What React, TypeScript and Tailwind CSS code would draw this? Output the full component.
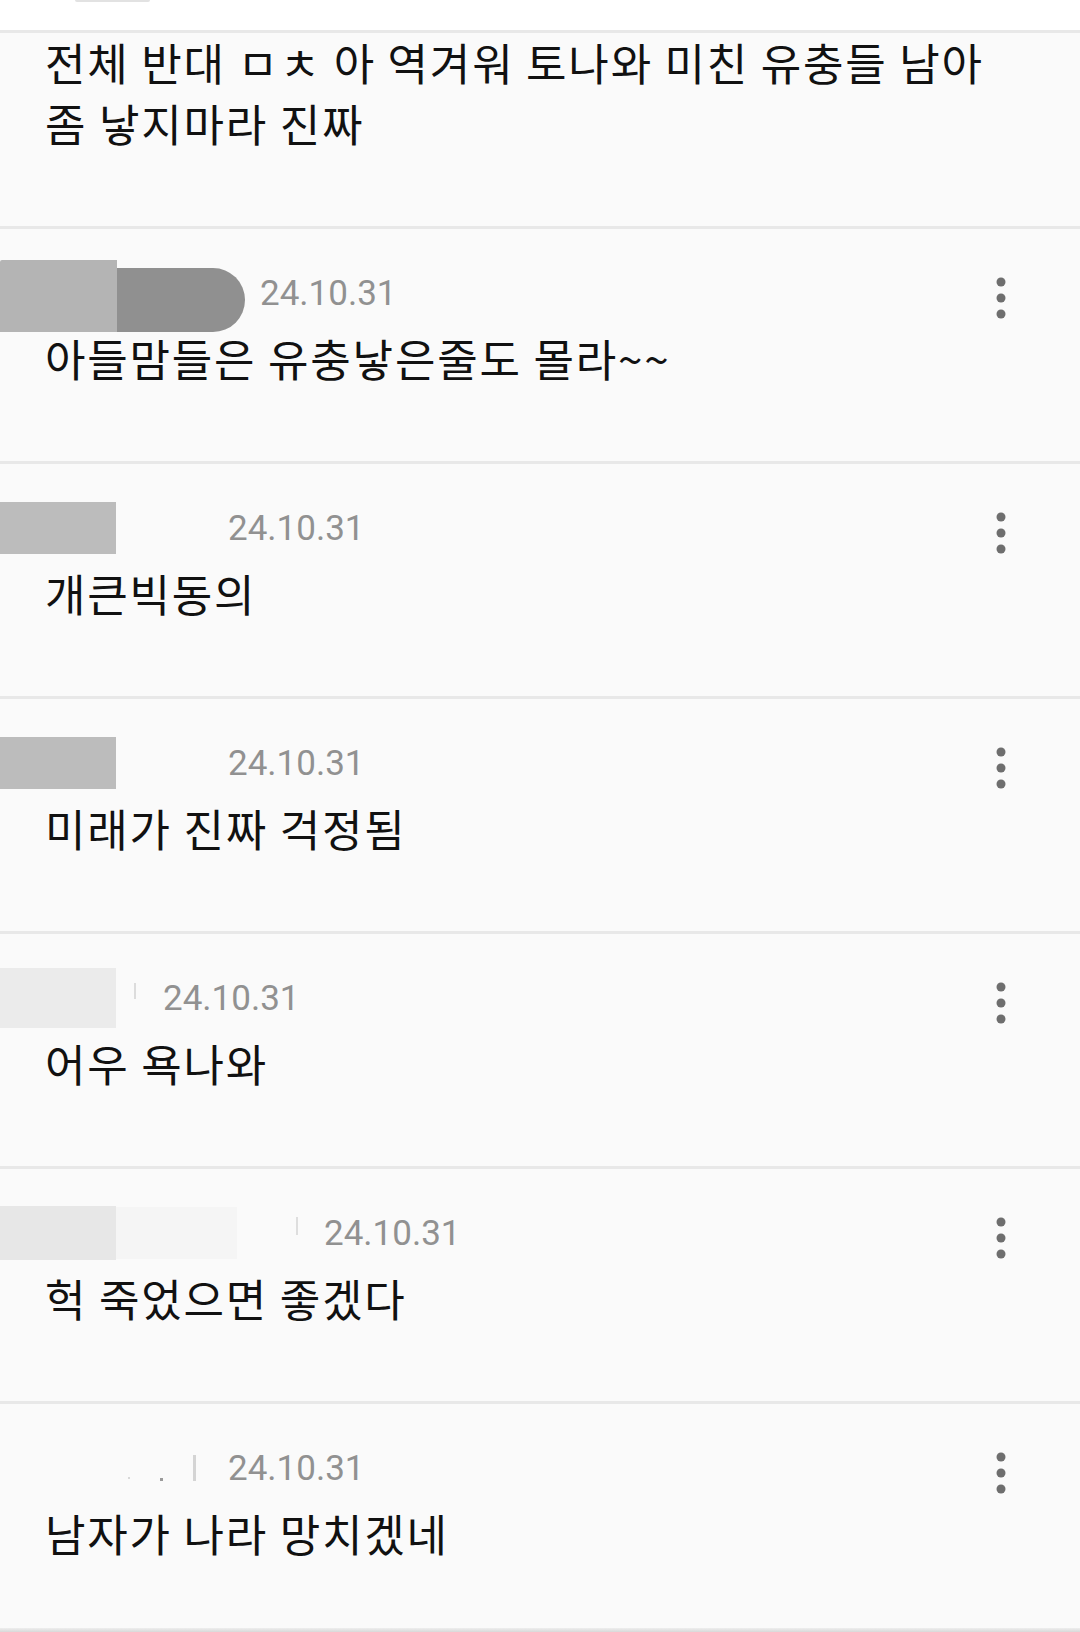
import React from "react";

const KR = { fontFamily: '"Noto Sans CJK KR", "Noto Sans", sans-serif' };
const RB = { fontFamily: 'Roboto, "Liberation Sans", sans-serif' };

function Dots() {
  return (
    <svg width="10" height="42" viewBox="0 0 10 42" className="block">
      <circle cx="5" cy="5" r="4.5" fill="#6e6e6e" />
      <circle cx="5" cy="21" r="4.5" fill="#6e6e6e" />
      <circle cx="5" cy="37" r="4.5" fill="#6e6e6e" />
    </svg>
  );
}

type Row = { blob: React.ReactNode; dateMl: string; text: string };

const rows: Row[] = [
  {
    blob: (
      <div className="flex w-[245px] h-[72px] items-stretch mt-[6px]">
        <div className="w-[117px] bg-[#b4b4b4] rounded-tl-[2px]" />
        <div className="w-[128px] bg-[#909090] mt-[8px] rounded-r-[34px]" />
      </div>
    ),
    dateMl: "ml-[15px]",
    text: "아들맘들은 유충낳은줄도 몰라~~",
  },
  {
    blob: <div className="w-[116px] h-[52px] bg-[#bcbcbc]" />,
    dateMl: "ml-[112px]",
    text: "개큰빅동의",
  },
  {
    blob: <div className="w-[116px] h-[52px] bg-[#bcbcbc]" />,
    dateMl: "ml-[112px]",
    text: "미래가 진짜 걱정됨",
  },
  {
    blob: (
      <div className="flex items-center">
        <div className="w-[116px] h-[60px] bg-[#ebebeb]" />
        <div className="ml-[18px] w-[2px] h-[16px] bg-[#dcdcdc] -mt-[14px]" />
      </div>
    ),
    dateMl: "ml-[27px]",
    text: "어우 욕나와",
  },
  {
    blob: (
      <div className="flex items-center">
        <div className="w-[116px] h-[54px] bg-[#e7e7e7]" />
        <div className="w-[121px] h-[52px] bg-[#f5f5f5]" />
        <div className="ml-[59px] w-[2px] h-[18px] bg-[#dedede] -mt-[14px]" />
      </div>
    ),
    dateMl: "ml-[26px]",
    text: "헉 죽었으면 좋겠다",
  },
  {
    blob: (
      <div className="flex items-center w-[206px]">
        <div className="ml-[128px] mt-[20px] w-[2px] h-[2px] bg-[#d8d8d8]" />
        <div className="ml-[30px] mt-[22px] w-[3px] h-[3px] bg-[#9a9a9a]" />
        <div className="ml-[30px] w-[3px] h-[26px] bg-[#d4d4d4]" />
      </div>
    ),
    dateMl: "ml-[22px]",
    text: "남자가 나라 망치겠네",
  },
];

export default function App() {
  return (
    <div className="w-[1080px] h-[1632px] overflow-hidden bg-[#fafafa] relative">
      <div className="h-[30px] bg-white relative">
        <div className="absolute left-[75px] top-0 w-[75px] h-[2px] rounded-b bg-[#e2e2e2]" />
      </div>
      <div className="border-t-[3px] border-[#e8e8e8] h-[196px] pl-[45px]">
        <p
          style={KR}
          className="-mt-[1px] text-[44px] leading-[61px] text-[#111111] tracking-[1.8px]"
        >
          전체 반대 ㅁㅊ 아 역겨워 토나와 미친 유충들 남아
          <br />좀 낳지마라 진짜
        </p>
      </div>
      {rows.map((r, i) => (
        <div
          key={i}
          className="border-t-[3px] border-[#e8e8e8] h-[235px] pt-[32px]"
        >
          <div className="flex items-center h-[64px]">
            {r.blob}
            <span
              style={RB}
              className={`${r.dateMl} text-[35px] leading-none text-[#919191]`}
            >
              24.10.31
            </span>
            <div className="ml-auto mr-[74px] mt-[10px]">
              <Dots />
            </div>
          </div>
          <p
            style={KR}
            className="pl-[45px] mt-[2px] text-[44px] leading-[62px] text-[#111111] tracking-[1.8px]"
          >
            {r.text}
          </p>
        </div>
      ))}
      <div className="absolute left-0 right-0 bottom-0 h-[4px] bg-gradient-to-b from-[#eeeeee] to-[#d8d8d8]" />
    </div>
  );
}
